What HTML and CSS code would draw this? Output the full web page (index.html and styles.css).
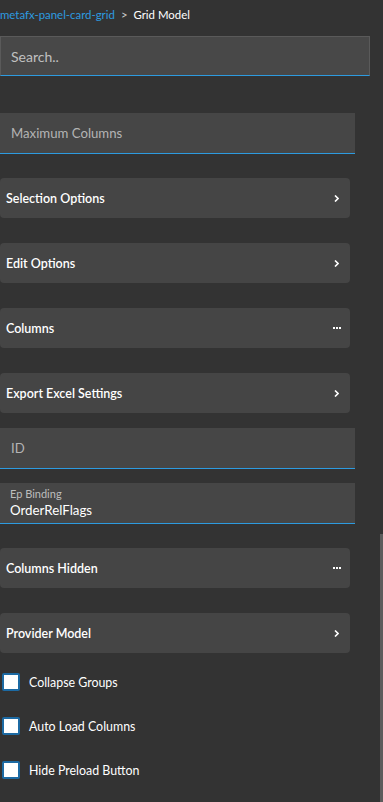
FILE: index.html
```html
<!DOCTYPE html>
<html lang="en">
<head>
    <meta charset="UTF-8">
    <title>Grid Model</title>
    <link rel="stylesheet" href="styles.css">
</head>
<body>

<div class="panel">
    <!-- Üst yol -->
    <div class="breadcrumb">
        <span class="crumb-link">metafx-panel-card-grid</span>
        <span class="crumb-sep">&gt;</span>
        <span class="crumb-current">Grid Model</span>
    </div>

    <!-- Arama -->
    <div class="search">
        <input type="text" placeholder="Search..">
    </div>

    <div class="props">
        <div class="field gap-37">
            <span class="field-placeholder">Maximum Columns</span>
        </div>

        <div class="card gap-24">
            <span class="card-title">Selection Options</span>
            <svg class="chevron" width="5" height="7" viewBox="0 0 5 7"><polyline points="1,0.5 4,3.5 1,6.5" fill="none" stroke="#fff" stroke-width="1.6"/></svg>
        </div>
        <div class="card gap-25">
            <span class="card-title">Edit Options</span>
            <svg class="chevron" width="5" height="7" viewBox="0 0 5 7"><polyline points="1,0.5 4,3.5 1,6.5" fill="none" stroke="#fff" stroke-width="1.6"/></svg>
        </div>
        <div class="card gap-25">
            <span class="card-title">Columns</span>
            <svg class="dots" width="8" height="2" viewBox="0 0 8 2"><rect x="0" y="0" width="2" height="2" fill="#fff"/><rect x="3" y="0" width="2" height="2" fill="#fff"/><rect x="6" y="0" width="2" height="2" fill="#fff"/></svg>
        </div>
        <div class="card gap-25">
            <span class="card-title">Export Excel Settings</span>
            <svg class="chevron" width="5" height="7" viewBox="0 0 5 7"><polyline points="1,0.5 4,3.5 1,6.5" fill="none" stroke="#fff" stroke-width="1.6"/></svg>
        </div>

        <div class="field gap-15">
            <span class="field-placeholder">ID</span>
        </div>
        <div class="field field-filled gap-14">
            <span class="field-label">Ep Binding</span>
            <span class="field-value">OrderRelFlags</span>
        </div>

        <div class="card gap-24">
            <span class="card-title">Columns Hidden</span>
            <svg class="dots" width="8" height="2" viewBox="0 0 8 2"><rect x="0" y="0" width="2" height="2" fill="#fff"/><rect x="3" y="0" width="2" height="2" fill="#fff"/><rect x="6" y="0" width="2" height="2" fill="#fff"/></svg>
        </div>
        <div class="card gap-25">
            <span class="card-title">Provider Model</span>
            <svg class="chevron" width="5" height="7" viewBox="0 0 5 7"><polyline points="1,0.5 4,3.5 1,6.5" fill="none" stroke="#fff" stroke-width="1.6"/></svg>
        </div>

        <div class="checks">
            <label class="check"><span class="box"></span>Collapse Groups</label>
            <label class="check"><span class="box"></span>Auto Load Columns</label>
            <label class="check"><span class="box"></span>Hide Preload Button</label>
        </div>
    </div>
</div>

<div class="scroll-thumb"></div>

</body>
</html>
```
FILE: styles.css
```css
/* Genel */
body {
    margin: 0;
    background-color: #333333;
    font-family: Lato, "Open Sans", sans-serif;
    color: #ffffff;
    height: 802px;
    overflow: hidden;
}

.panel {
    display: flex;
    flex-direction: column;
}

/* Üst yol */
.breadcrumb {
    height: 36px;
    display: flex;
    align-items: center;
    gap: 6px;
    font-size: 11.4px;
    padding-bottom: 7px;
    box-sizing: border-box;
}

.crumb-link {
    color: #2d9be0;
}

.crumb-sep {
    color: #cccccc;
}

.crumb-current {
    color: #ffffff;
}

/* Arama */
.search {
    width: 370px;
}

.search input {
    width: 100%;
    height: 40px;
    box-sizing: border-box;
    background-color: #484848;
    border: 1px solid #5a5a5a;
    border-bottom: 1px solid #2d9be0;
    color: #ffffff;
    font-family: inherit;
    font-size: 14px;
    padding: 0 10px;
    outline: none;
}

.search input::placeholder {
    color: #c0c0c0;
}

/* Alanlar */
.props {
    display: flex;
    flex-direction: column;
}

.field {
    width: 355px;
    height: 41px;
    box-sizing: border-box;
    background-color: #464646;
    border-bottom: 1px solid #2d9be0;
    padding: 0 11px;
    display: flex;
    align-items: center;
}

.field-placeholder {
    color: #b4b4b4;
    font-size: 13.2px;
}

.field-filled {
    flex-direction: column;
    align-items: flex-start;
    justify-content: center;
    padding-left: 10px;
}

.field-label {
    color: #bdbdbd;
    font-size: 11px;
    line-height: 14px;
}

.field-value {
    color: #ffffff;
    font-size: 13.3px;
    line-height: 18px;
}

/* Kartlar */
.card {
    width: 350px;
    height: 40px;
    box-sizing: border-box;
    background-color: #454545;
    border-radius: 4px;
    display: flex;
    align-items: center;
    justify-content: space-between;
    padding: 0 10px 0 6px;
}

.card-title {
    font-size: 12.5px;
    font-weight: 600;
}

.chevron {
    margin-right: 1px;
}

.dots {
    margin-right: -1px;
}

.gap-14 { margin-top: 14px; }
.gap-15 { margin-top: 15px; }
.gap-24 { margin-top: 24px; }
.gap-25 { margin-top: 25px; }
.gap-37 { margin-top: 37px; }

/* Onay kutuları */
.checks {
    margin-top: 7px;
    display: flex;
    flex-direction: column;
}

.check {
    height: 44px;
    display: flex;
    align-items: center;
    gap: 9px;
    padding-left: 2px;
    font-size: 12.4px;
}

.box {
    width: 18px;
    height: 18px;
    box-sizing: border-box;
    background-color: #ffffff;
    border: 2px solid #1c6aa3;
    border-radius: 2px;
}

/* Kaydırma çubuğu */
.scroll-thumb {
    position: absolute;
    right: 0;
    top: 534px;
    width: 3px;
    height: 268px;
    background-color: #5c5c5c;
}
```
